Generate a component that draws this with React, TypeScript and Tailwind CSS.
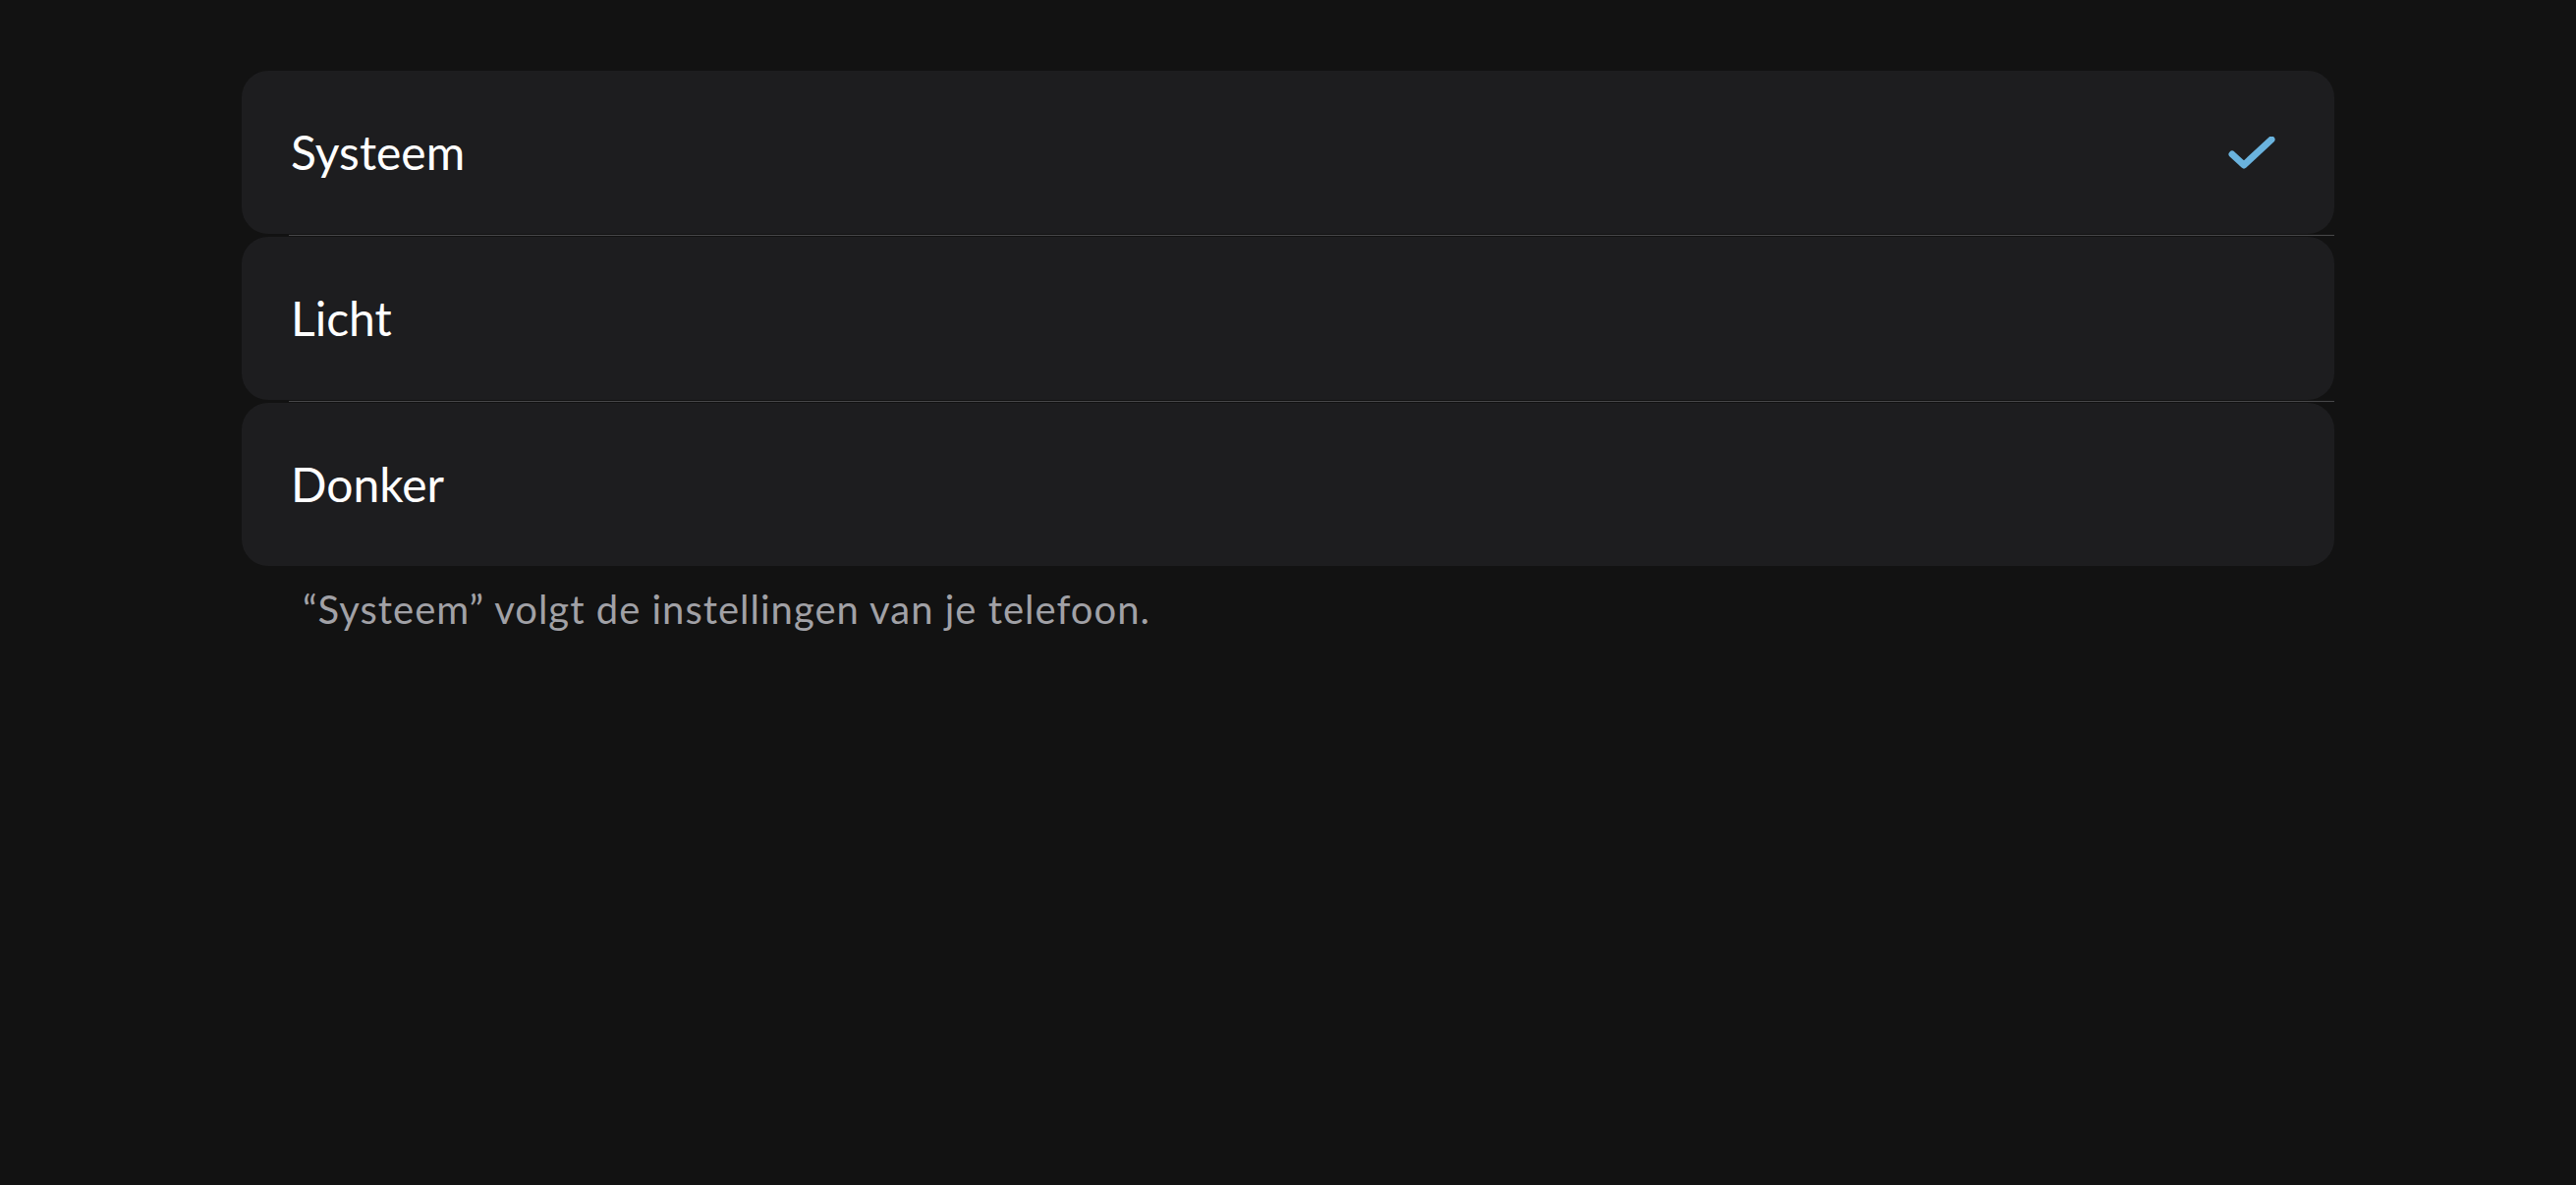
const options = [
  { label: 'Systeem', selected: true },
  { label: 'Licht', selected: false },
  { label: 'Donker', selected: false },
]

function Check() {
  return (
    <svg width="48" height="36" viewBox="0 0 48 36" fill="none" className="mt-[4px]">
      <path
        d="M4 18 L16 29 L44 3"
        stroke="#6ab3de"
        strokeWidth="7"
        strokeLinecap="round"
        strokeLinejoin="round"
      />
    </svg>
  )
}

export default function App() {
  return (
    <div
      className="min-h-screen w-full bg-[#121212] pt-[72px] pl-[246px] pr-[246px]"
      style={{ fontFamily: 'Lato, "Noto Sans", sans-serif' }}
    >
      <div className="flex flex-col">
        {options.map((opt, i) => (
          <div key={opt.label}>
            {i > 0 && (
              <div className="h-[3px] flex items-center">
                <div className="ml-[48px] h-px flex-1 bg-[#48484a]" />
              </div>
            )}
            <div className="h-[166px] rounded-[27px] bg-[#1d1d1f] flex items-center justify-between pl-[50px] pr-[60px]">
              <span className="text-[48px] text-white">{opt.label}</span>
              {opt.selected && <Check />}
            </div>
          </div>
        ))}
      </div>
      <p className="mt-[14px] pl-[62px] text-[40px] tracking-[1px] text-[#a1a1a6]">
        “Systeem” volgt de instellingen van je telefoon.
      </p>
    </div>
  )
}
